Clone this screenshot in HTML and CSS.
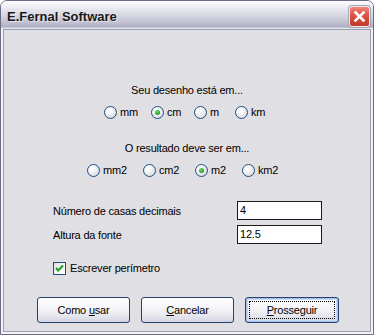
FILE: index.html
```html
<!DOCTYPE html>
<html lang="pt">
<head>
<meta charset="utf-8">
<title>E.Fernal Software</title>
<link rel="stylesheet" href="styles.css">
</head>
<body>
<div class="window">
  <div class="titlebar">
    <span class="title">E.Fernal Software</span>
    <span class="close"><svg width="21" height="21" viewBox="0 0 21 21"><path d="M6.5 6.5 L14.5 14.5 M14.5 6.5 L6.5 14.5" stroke="#fff" stroke-width="2.6" stroke-linecap="square"/></svg></span>
  </div>
  <div class="client">
    <div class="heading h1">Seu desenho está em...</div>
    <div class="radios r1">
      <span class="radio"><span class="dot"></span>mm</span>
      <span class="radio"><span class="dot on"></span>cm</span>
      <span class="radio"><span class="dot"></span>m</span>
      <span class="radio"><span class="dot"></span>km</span>
    </div>
    <div class="heading h2">O resultado deve ser em...</div>
    <div class="radios r2">
      <span class="radio"><span class="dot"></span>mm2</span>
      <span class="radio"><span class="dot"></span>cm2</span>
      <span class="radio"><span class="dot on"></span>m2</span>
      <span class="radio"><span class="dot"></span>km2</span>
    </div>
    <div class="fields">
      <span class="lbl">Número de casas decimais</span><span class="input">4</span>
      <span class="lbl">Altura da fonte</span><span class="input">12.5</span>
    </div>
    <div class="check"><span class="box"><svg width="11" height="11" viewBox="0 0 11 11"><path d="M2 5 L4.3 7.5 L9 2.5" fill="none" stroke="#21a121" stroke-width="2.2"/></svg></span>Escrever perímetro</div>
    <div class="buttons">
      <span class="btn"><span class="cap">Como <u>u</u>sar</span></span>
      <span class="btn"><span class="cap"><u>C</u>ancelar</span></span>
      <span class="btn def"><span class="focus"><span class="cap"><u>P</u>rosseguir</span></span></span>
    </div>
  </div>
</div>
</body>
</html>
```

FILE: styles.css
```css
html, body {
  margin: 0;
  padding: 0;
  background: #ffffff;
}
body {
  width: 374px;
  height: 335px;
  overflow: hidden;
  font-family: "Liberation Sans", Arial, sans-serif;
  font-size: 11px;
  color: #000;
}
.window {
  box-sizing: border-box;
  width: 374px;
  height: 335px;
  border: 1px solid #6b6b85;
  border-radius: 7px 7px 0 0;
  background: #f3f3f7;
  display: flex;
  flex-direction: column;
  overflow: hidden;
}
.titlebar {
  height: 28px;
  flex: none;
  display: flex;
  align-items: center;
  padding-left: 6px;
  padding-right: 3px;
  background: linear-gradient(to bottom, #fefeff 0px, #f5f5f8 3px, #e4e4ec 9px, #d2d2de 16px, #bfbfd0 22px, #adadc2 26px, #dcdce6 27px, #eeeef3 28px);
}
.title {
  font-family: "Liberation Sans", Arial, sans-serif;
  font-weight: bold;
  font-size: 13px;
  color: #1a1a1a;
  text-shadow: 1px 1px 0 rgba(255,255,255,0.55);
  padding-top: 2px;
}
.close {
  margin-left: auto;
  width: 21px;
  height: 21px;
  box-sizing: border-box;
  border-radius: 3px;
  border: 1px solid #f6e8e6;
  box-shadow: 0 0 0 1px #a4a4b8;
  background: linear-gradient(to bottom, #ec8a7e 0%, #e05a4c 35%, #cf4436 70%, #c1392d 100%);
  display: flex;
  align-items: center;
  justify-content: center;
  margin-top: 2px;
}
.close svg {
  display: block;
  margin: -1px;
}
.client {
  flex: 1;
  margin: 0 2px 2px;
  border: 1px solid #9c9cb2;
  background: #e0dfe3;
  display: flex;
  flex-direction: column;
  letter-spacing: -0.2px;
}
.heading {
  line-height: 13px;
  height: 13px;
  text-align: center;
}
.h1 { margin-top: 54px; }
.h2 { margin-top: 23px; }
.radios {
  display: grid;
  height: 13px;
  line-height: 13px;
}
.r1 {
  margin-top: 9px;
  margin-left: 100px;
  grid-template-columns: 47px 43px 41px auto;
}
.r2 {
  margin-top: 9px;
  margin-left: 83px;
  grid-template-columns: 56px 52px 47px auto;
}
.radio {
  display: flex;
  align-items: center;
  gap: 3px;
  white-space: nowrap;
}
.dot {
  box-sizing: border-box;
  width: 13px;
  height: 13px;
  border-radius: 50%;
  border: 1px solid #1f4f7e;
  background: radial-gradient(circle at 35% 30%, #ffffff 0%, #f6f6f8 35%, #dcdce2 75%, #c9c9d2 100%);
  display: flex;
  align-items: center;
  justify-content: center;
  flex: none;
}
.dot.on::after {
  content: "";
  width: 5px;
  height: 5px;
  border-radius: 50%;
  background: radial-gradient(circle at 40% 35%, #6fd86f 0%, #2aab2a 60%, #1a8a1a 100%);
}
.fields {
  margin-top: 24px;
  margin-left: 49px;
  display: grid;
  grid-template-columns: 184px 85px;
  grid-auto-rows: 19px;
  row-gap: 5px;
  align-items: center;
}
.input {
  box-sizing: border-box;
  height: 19px;
  border: 1px solid #1a1a1a;
  background: #fff;
  padding: 0 2px;
  line-height: 17px;
}
.check {
  margin-top: 18px;
  margin-left: 49px;
  display: flex;
  align-items: center;
  gap: 4px;
  height: 13px;
  line-height: 13px;
}
.box {
  box-sizing: border-box;
  width: 13px;
  height: 13px;
  border: 1px solid #1f4f7e;
  background: linear-gradient(135deg, #dcdce2 0%, #f4f4f6 50%, #ffffff 100%);
  display: flex;
  align-items: center;
  justify-content: center;
}
.box svg { display: block; }
.buttons {
  margin-top: 22px;
  margin-left: 33px;
  display: flex;
  gap: 11px;
}
.btn {
  box-sizing: border-box;
  width: 93px;
  height: 26px;
  border: 1px solid #23416e;
  border-radius: 3px;
  background: linear-gradient(to bottom, #ffffff 0%, #f7f7fa 35%, #e9e9f0 70%, #d3d4e2 100%);
  display: flex;
  align-items: center;
  justify-content: center;
  line-height: 13px;
}
.cap {
  white-space: pre;
}
.btn.def {
  box-shadow: inset 0 0 0 1px #a9c2ec, inset 0 0 0 2px #c8d8f4;
  width: 94px;
}
.focus {
  box-sizing: border-box;
  width: 86px;
  height: 18px;
  border: 1px dotted #000;
  display: flex;
  align-items: center;
  justify-content: center;
}
u {
  text-decoration: underline;
  text-underline-offset: 1px;
}
```
